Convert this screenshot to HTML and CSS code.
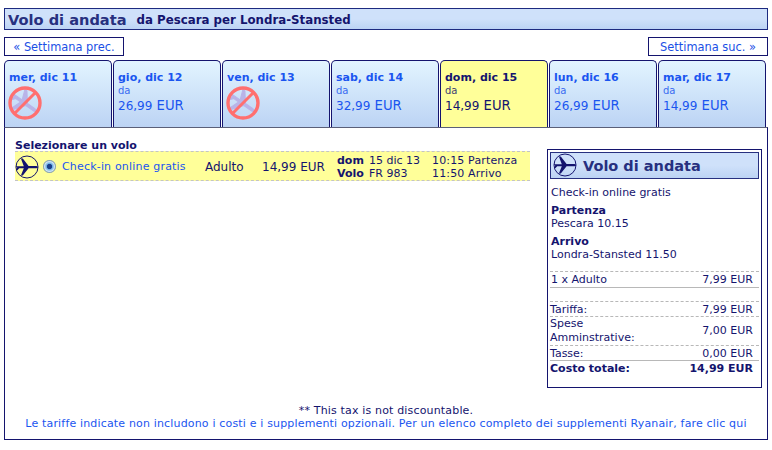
FILE: index.html
```html
<!DOCTYPE html>
<html lang="it">
<head>
<meta charset="utf-8">
<title>Volo di andata</title>
<link rel="stylesheet" href="styles.css">
</head>
<body>
<svg class="defs" width="0" height="0" aria-hidden="true">
  <symbol id="plane" viewBox="0 0 24 24">
    <circle cx="12" cy="12" r="11" fill="none" stroke="currentColor" stroke-width="1"/>
    <path fill="currentColor" d="M1 11.3H8.8L5.9 3.4H7.8L13.6 11.1H20C22 11.1 23 11.6 23 12.2 23 12.8 22 13.2 20 13.2H13.6L7.8 20.6H5.9L8.8 13.2H4.2L2.6 15H1.5L2.2 12.3 1 12.1Z"/>
  </symbol>
  <symbol id="noflight" viewBox="0 0 34 34">
    <g transform="rotate(35 17 17) translate(1.5 1.5) scale(1.3)">
      <path fill="#b9b4e8" stroke="#b9b4e8" stroke-width=".8" d="M1 11.3H8.8L5.9 3.4H7.8L13.6 11.1H20C22 11.1 23 11.6 23 12.2 23 12.8 22 13.2 20 13.2H13.6L7.8 20.6H5.9L8.8 13.2H4.2L2.6 15H1.5L2.2 12.3 1 12.1Z"/>
    </g>
    <circle cx="17" cy="17" r="15" fill="none" stroke="#ff6f6f" stroke-width="3.4"/>
    <path d="M28 6 6 28" stroke="#ff6f6f" stroke-width="3"/>
  </symbol>
</svg>

<header class="title-bar">
  <h1 class="title">Volo di andata</h1>
  <span class="route">da Pescara per Londra-Stansted</span>
</header>

<nav class="week-nav">
  <a class="week-link">« Settimana prec.</a>
  <a class="week-link">Settimana suc. »</a>
</nav>

<div class="tabs">
  <div class="tab"><div class="tab-day">mer, dic 11</div><svg class="no-icon"><use href="#noflight"/></svg></div>
  <div class="tab"><div class="tab-day">gio, dic 12</div><div class="tab-from">da</div><div class="tab-price"><span class="small">26,99</span> EUR</div></div>
  <div class="tab"><div class="tab-day">ven, dic 13</div><svg class="no-icon"><use href="#noflight"/></svg></div>
  <div class="tab"><div class="tab-day">sab, dic 14</div><div class="tab-from">da</div><div class="tab-price"><span class="small">32,99</span> EUR</div></div>
  <div class="tab selected"><div class="tab-day">dom, dic 15</div><div class="tab-from">da</div><div class="tab-price"><span class="small">14,99</span> EUR</div></div>
  <div class="tab"><div class="tab-day">lun, dic 16</div><div class="tab-from">da</div><div class="tab-price"><span class="small">26,99</span> EUR</div></div>
  <div class="tab"><div class="tab-day">mar, dic 17</div><div class="tab-from">da</div><div class="tab-price"><span class="small">14,99</span> EUR</div></div>
</div>

<main class="panel">
  <div class="columns">
    <section class="flights">
      <h2 class="select-title">Selezionare un volo</h2>
      <div class="flight-row">
        <svg class="plane-icon"><use href="#plane"/></svg>
        <span class="radio"></span>
        <a class="fare-link">Check-in online gratis</a>
        <span class="pax">Adulto</span>
        <span class="fare">14,99 EUR</span>
        <div class="info">
          <div><b class="info-label">dom</b>15 dic 13</div>
          <div><b class="info-label">Volo</b>FR 983</div>
        </div>
        <div class="times">
          <div>10:15 Partenza</div>
          <div>11:50 Arrivo</div>
        </div>
      </div>
    </section>

    <aside class="summary">
      <div class="summary-head">
        <svg class="summary-plane"><use href="#plane"/></svg>
        <span>Volo di andata</span>
      </div>
      <p class="s-line first">Check-in online gratis</p>
      <p class="s-line"><b>Partenza</b><br>Pescara 10.15</p>
      <p class="s-line"><b>Arrivo</b><br>Londra-Stansted 11.50</p>
      <div class="costs">
        <div class="cost gap-top"><span>1 x Adulto</span><span>7,99 EUR</span></div>
        <div class="cost spacer"></div>
        <div class="cost"><span>Tariffa:</span><span>7,99 EUR</span></div>
        <div class="cost tall"><span>Spese<br>Amminstrative:</span><span>7,00 EUR</span></div>
        <div class="cost solid"><span>Tasse:</span><span>0,00 EUR</span></div>
        <div class="cost total"><span>Costo totale:</span><span>14,99 EUR</span></div>
      </div>
    </aside>
  </div>

  <footer class="notes">
    <div>** This tax is not discountable.</div>
    <a class="note-link">Le tariffe indicate non includono i costi e i supplementi opzionali. Per un elenco completo dei supplementi Ryanair, fare clic qui</a>
  </footer>
</main>
</body>
</html>
```

FILE: styles.css
```css
* { box-sizing: border-box; }
html, body { margin: 0; padding: 0; background: #fff; }
body {
  width: 772px;
  height: 450px;
  padding: 8px 4px 0 4px;
  font-family: "DejaVu Sans", Verdana, sans-serif;
  font-size: 11px;
  color: #14146e;
  overflow: hidden;
}
.defs { position: absolute; }
b { font-weight: bold; }

.title-bar {
  height: 22px;
  border: 1px solid #1d2a80;
  background: linear-gradient(#cfe1fa 0, #cfe1fa 50%, #bcd3f4 100%);
  display: flex;
  align-items: center;
  padding-left: 3px;
  gap: 10px;
}
.title { margin: 0; font-size: 14.6px; font-weight: bold; color: #27307f; }
.route { font-size: 11.8px; font-weight: bold; color: #14146e; padding-top: 1px; }

.week-nav { display: flex; justify-content: space-between; margin-top: 7px; }
.week-link {
  width: 120px;
  height: 19px;
  border: 1px solid #14146e;
  color: #1a4fe6;
  font-size: 11.4px;
  display: flex;
  align-items: center;
  justify-content: center;
}

.tabs { display: flex; gap: 1px; margin-top: 4px; height: 67px; }
.tab {
  flex: 0 0 108px;
  border: 1px solid #14146e;
  border-bottom: 0;
  border-radius: 5px 5px 0 0;
  background: linear-gradient(#e2f4ff, #bcd3f4);
  padding: 10px 4px 0 4px;
  color: #1a55f0;
}
.tab.selected { background: #ffff99; color: #14146e; }
.tab-day { font-weight: bold; font-size: 11px; line-height: 13px; }
.tab-from { font-size: 10px; line-height: 12px; margin-top: 1px; opacity: .85; }
.tab-price { font-size: 13.2px; line-height: 16px; margin-top: 1px; }
.small { font-size: 12px; }
.no-icon { display: block; width: 34px; height: 34px; margin: 2px 0 0 -1px; }

.panel {
  height: 313px;
  border: 1px solid #14146e;
  border-top-color: #5a5f78;
  display: flex;
  flex-direction: column;
}
.columns { display: flex; flex: 1 1 auto; padding: 10px 5px 0 10px; gap: 17px; }
.flights { width: 515px; flex: none; }
.select-title { margin: 2px 0 -1px 0; font-size: 11px; line-height: 12px; font-weight: bold; color: #14146e; }
.flight-row {
  height: 30px;
  padding-top: 1px;
  background: #ffff99;
  border-top: 1px dashed #c4c4c4;
  border-bottom: 1px dashed #c4c4c4;
  display: flex;
  align-items: center;
  font-size: 11px;
}
.plane-icon { width: 24px; height: 24px; flex: none; color: #14146e; }
.radio {
  width: 13px; height: 13px; flex: none; margin-left: 4px; border-radius: 50%;
  background: radial-gradient(circle, #1c3f8a 0 2.2px, #6db0e6 3px, #cfe3f2 5px, #5d7f9e 6.5px);
}
.fare-link { color: #1a55f0; margin-left: 6px; width: 143px; flex: none; font-size: 11px; letter-spacing: .18px; }
.pax { width: 57px; flex: none; font-size: 12px; }
.fare { width: 75px; flex: none; font-size: 12px; }
.info { width: 95px; flex: none; line-height: 13px; font-size: 11px; }
.info-label { display: inline-block; width: 32px; }
.times { flex: none; line-height: 13px; font-size: 11px; letter-spacing: .15px; }

.summary {
  width: 215px;
  height: 239px;
  flex: none;
  margin-top: 11px;
  border: 1px solid #14146e;
  padding: 2px 2px;
}
.summary-head {
  height: 27px;
  border: 1px solid #27307f;
  background: linear-gradient(#cfe1fa 0, #cfe1fa 50%, #bcd3f4 100%);
  display: flex;
  align-items: center;
  gap: 6px;
  padding-left: 2px;
  font-size: 14.5px;
  font-weight: bold;
  color: #27307f;
}
.summary-plane { width: 24px; height: 24px; color: #14146e; flex: none; margin-top: -2px; }
.s-line { margin: 5px 0 0 1px; line-height: 13px; font-size: 11px; }
.s-line.first { margin-top: 7px; }

.costs { margin-top: 10px; font-size: 11px; }
.cost {
  display: flex;
  justify-content: space-between;
  align-items: center;
  border-bottom: 1px dashed #b8b8b8;
  padding: 1px 6px 0 0;
  line-height: 13px;
}
.cost.gap-top { border-top: 1px dashed #b8b8b8; border-bottom-style: solid; padding-left: 1px; padding-bottom: 1px; }
.cost.spacer { height: 14px; padding: 0; }
.cost.tall { line-height: 14px; padding-top: 0; }
.cost.solid { border-bottom: 1px solid #b8b8b8; }
.cost.total { border: 0; font-weight: bold; }

.notes { text-align: center; line-height: 13px; padding-bottom: 9px; font-size: 11px; letter-spacing: .165px; }
.note-link { color: #1a55f0; }
```
